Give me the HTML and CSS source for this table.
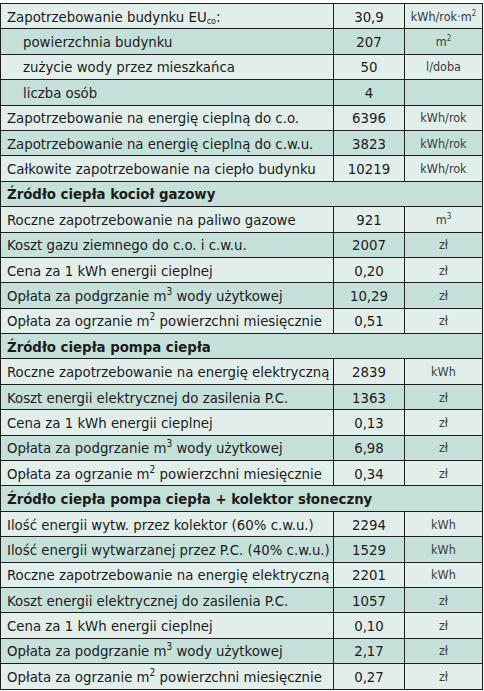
FILE: index.html
```html
<!DOCTYPE html>
<html lang="pl">
<head>
<meta charset="utf-8">
<link rel="stylesheet" href="styles.css">
</head>
<body>
<table class="tbl">
  <colgroup><col class="c-label"><col class="c-val"><col class="c-unit"></colgroup>
  <tbody>
    <tr class="lt"><td>Zapotrzebowanie budynku EU<sub>co</sub>:</td><td class="v">30,9</td><td class="u">kWh/rok·m<sup>2</sup></td></tr>
    <tr class="dk"><td class="ind">powierzchnia budynku</td><td class="v">207</td><td class="u">m<sup>2</sup></td></tr>
    <tr class="lt"><td class="ind">zużycie wody przez mieszkańca</td><td class="v">50</td><td class="u">l/doba</td></tr>
    <tr class="dk"><td class="ind">liczba osób</td><td class="v">4</td><td class="u"></td></tr>
    <tr class="lt"><td>Zapotrzebowanie na energię cieplną do c.o.</td><td class="v">6396</td><td class="u">kWh/rok</td></tr>
    <tr class="dk"><td>Zapotrzebowanie na energię cieplną do c.w.u.</td><td class="v">3823</td><td class="u">kWh/rok</td></tr>
    <tr class="lt"><td>Całkowite zapotrzebowanie na ciepło budynku</td><td class="v">10219</td><td class="u">kWh/rok</td></tr>
    <tr class="dk hd"><td colspan="3">Źródło ciepła kocioł gazowy</td></tr>
    <tr class="lt"><td>Roczne zapotrzebowanie na paliwo gazowe</td><td class="v">921</td><td class="u">m<sup>3</sup></td></tr>
    <tr class="dk"><td>Koszt gazu ziemnego do c.o. i c.w.u.</td><td class="v">2007</td><td class="u">zł</td></tr>
    <tr class="lt"><td>Cena za 1 kWh energii cieplnej</td><td class="v">0,20</td><td class="u">zł</td></tr>
    <tr class="dk"><td>Opłata za podgrzanie m<sup class="big">3</sup> wody użytkowej</td><td class="v">10,29</td><td class="u">zł</td></tr>
    <tr class="lt"><td>Opłata za ogrzanie m<sup class="big">2</sup> powierzchni miesięcznie</td><td class="v">0,51</td><td class="u">zł</td></tr>
    <tr class="dk hd"><td colspan="3">Źródło ciepła pompa ciepła</td></tr>
    <tr class="lt"><td>Roczne zapotrzebowanie na energię elektryczną</td><td class="v">2839</td><td class="u">kWh</td></tr>
    <tr class="dk"><td>Koszt energii elektrycznej do zasilenia P.C.</td><td class="v">1363</td><td class="u">zł</td></tr>
    <tr class="lt"><td>Cena za 1 kWh energii cieplnej</td><td class="v">0,13</td><td class="u">zł</td></tr>
    <tr class="dk"><td>Opłata za podgrzanie m<sup class="big">3</sup> wody użytkowej</td><td class="v">6,98</td><td class="u">zł</td></tr>
    <tr class="lt"><td>Opłata za ogrzanie m<sup class="big">2</sup> powierzchni miesięcznie</td><td class="v">0,34</td><td class="u">zł</td></tr>
    <tr class="dk hd"><td colspan="3">Źródło ciepła pompa ciepła + kolektor słoneczny</td></tr>
    <tr class="lt"><td>Ilość energii wytw. przez kolektor (60% c.w.u.)</td><td class="v">2294</td><td class="u">kWh</td></tr>
    <tr class="dk"><td>Ilość energii wytwarzanej przez P.C. (40% c.w.u.)</td><td class="v">1529</td><td class="u">kWh</td></tr>
    <tr class="lt"><td>Roczne zapotrzebowanie na energię elektryczną</td><td class="v">2201</td><td class="u">kWh</td></tr>
    <tr class="dk"><td>Koszt energii elektrycznej do zasilenia P.C.</td><td class="v">1057</td><td class="u">zł</td></tr>
    <tr class="lt"><td>Cena za 1 kWh energii cieplnej</td><td class="v">0,10</td><td class="u">zł</td></tr>
    <tr class="dk"><td>Opłata za podgrzanie m<sup class="big">3</sup> wody użytkowej</td><td class="v">2,17</td><td class="u">zł</td></tr>
    <tr class="lt"><td>Opłata za ogrzanie m<sup class="big">2</sup> powierzchni miesięcznie</td><td class="v">0,27</td><td class="u">zł</td></tr>
  </tbody>
</table>
</body>
</html>
```

FILE: styles.css
```css
html, body {
  margin: 0;
  padding: 0;
  background: #ffffff;
}
body {
  padding: 3px 2px 0 0;
  font-family: "DejaVu Sans Condensed", "Liberation Sans", sans-serif;
  color: #1c1c1c;
}
.tbl {
  width: 482px;
  border-collapse: collapse;
  table-layout: fixed;
  font-size: 14.8px;
}
.c-label { width: 333px; }
.c-val { width: 71px; }
.c-unit { width: 78px; }
.tbl td {
  border: 1px solid #1e1e1e;
  height: 23.4px;
  padding: 1px 0 0 6px;
  line-height: 16px;
  white-space: nowrap;
  overflow: hidden;
}
.tbl tr.lt td { background: #e1eee9; }
.tbl tr.dk td { background: #c5e0d8; }
.tbl td.ind { padding-left: 22px; }
.tbl td.v { text-align: center; padding: 1px 0 0 0; }
.tbl td.u {
  text-align: center;
  padding: 1px 0 0 0;
  font-size: 12.5px;
  color: #3c3c3c;
}
.tbl tr.hd td { font-weight: bold; }
sub { font-size: 9px; vertical-align: -2px; line-height: 0; }
sup { font-size: 8px; vertical-align: 5px; line-height: 0; }
sup.big { font-size: 10px; vertical-align: 6px; }
```
